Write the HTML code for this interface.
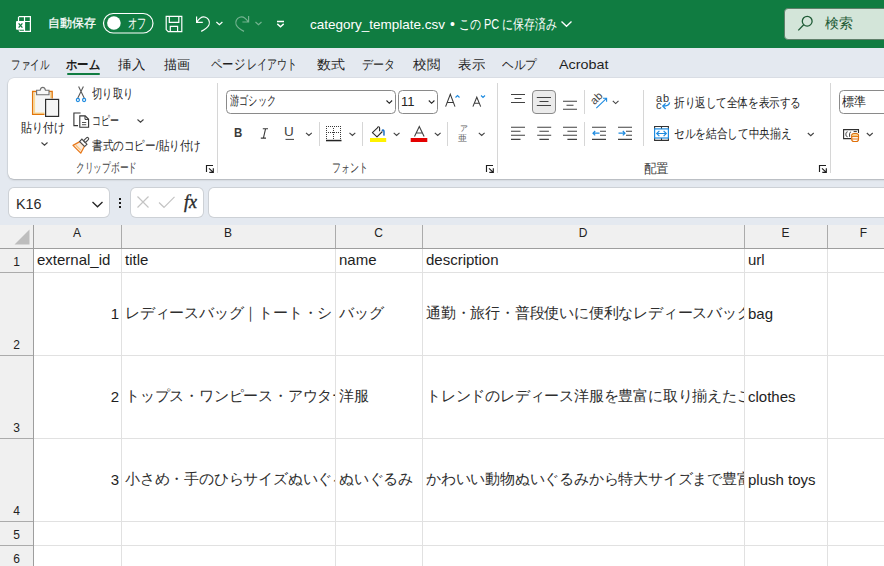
<!DOCTYPE html><html><head><meta charset="utf-8">
<style>
*{box-sizing:border-box}
html,body{margin:0;padding:0;width:884px;height:566px;overflow:hidden;background:#E4E9F0;font-family:"Liberation Sans",sans-serif;color:#242424}
.a{position:absolute;white-space:nowrap}
#title{position:absolute;left:0;top:0;width:884px;height:48px;background:#107C41;color:#fff}
#ribbon{position:absolute;left:8px;top:78px;width:900px;height:101px;background:#fff;border-radius:6px;box-shadow:0 0 0 .5px rgba(0,0,0,.08),0 1px 2px rgba(0,0,0,.2)}
.tab{position:absolute;top:56px;font-size:13px;color:#1F1F1F;white-space:nowrap}
.rt{position:absolute;font-size:12.5px;color:#242424;white-space:nowrap}
.box{position:absolute;background:#fff;border-radius:5px;box-shadow:0 0 0 1px #CDD1D6}
#grid{position:absolute;left:0;top:225px;width:884px;height:341px;background:#fff;overflow:hidden}
.ch{position:absolute;top:0;height:23px;background:#F0F0F0;border-right:1px solid #ABABAB;font-size:13px;color:#222;text-align:center;line-height:23px}
.rh{position:absolute;left:0;width:33px;background:#F0F0F0;border-bottom:1px solid #ABABAB;border-right:1px solid #9E9E9E;font-size:13px;color:#222;text-align:center}
.cell{position:absolute;font-size:15px;color:#1E1E1E;overflow:hidden;white-space:nowrap}
</style></head><body>
<div id="title">
<svg class="a" style="left:0;top:0" width="320" height="48" viewBox="0 0 320 48" fill="none" stroke="#fff" stroke-width="1.2">
 <path d="M18.8 16.6h11.6v14.8H19.8l-1-1"></path>
 <path d="M24.5 16.6v4.9M18.8 21.5h11.6M24.5 21.5v9.9"></path>
 <path d="M18.5 16.8v4.4"></path>
 <rect x="16" y="21" width="9" height="8.8" rx="1" fill="#fff" stroke="none"></rect>
 <path d="M18.6 23.4l3.8 4.2M22.4 23.4l-3.8 4.2" stroke="#107C41" stroke-width="1.3"></path>
 <rect x="103.5" y="13.5" width="49.5" height="19.5" rx="9.75"></rect>
 <circle cx="113.9" cy="23" r="6.8" fill="#fff" stroke="none"></circle>
 <path d="M166.2 16.4h15.6v15.2H168.2l-2-2z"></path>
 <path d="M169.3 16.4v5.9h9.5v-5.9M170.3 31.6v-5.3h7.3v5.3"></path>
 <path d="M196.6 16.4v6h6.2M196.8 22.2C199.5 17.8 203 16.4 205.5 17.2C208.6 18.3 210.2 21.5 209 24.8C208 27.2 204.5 29.8 201.2 31.4"></path>
 <path d="M216.4 22l3 2.7 3-2.7"></path>
 <g stroke="#fff" stroke-opacity=".42"><path d="M248.6 16v6h-6.2M248.4 22.2C245.7 17.8 242.2 16.4 239.7 17.2C236.6 18.3 235 21.5 236.2 24.8C237.2 27.2 240.7 29.8 244 31.4"></path>
 <path d="M255.5 22l3 2.7 3-2.7"></path></g>
 <path d="M277 21.5h7M277.3 23.9l3.2 2.8 3.2-2.8" stroke-width="1.4"></path>
</svg>
<span class="a t" style="left: 47.5px; top: 14.8px; font-size: 12.3px; --w: 48px; -webkit-text-stroke: 0.25px rgb(255, 255, 255); transform: scaleX(1); transform-origin: 0px 50%;">自動保存</span>
<span class="a t" style="left: 127.5px; top: 15px; font-size: 13.5px; --w: 18.5px; transform: scaleX(0.6607); transform-origin: 0px 50%;">オフ</span>
<span class="a t" style="left: 309.5px; top: 16.5px; font-size: 13.5px; --w: 135px; transform: scaleX(0.9994); transform-origin: 0px 50%;">category_template.csv</span>
<span class="a" style="left:450px;top:16px;font-size:14px">•</span>
<span class="a t" style="left: 459px; top: 16px; font-size: 14px; --w: 98px; transform: scaleX(0.7825); transform-origin: 0px 50%;">この PC に保存済み</span>
<svg class="a" style="left:560px;top:19px" width="14" height="10"><path d="M1.5 2.5l5 4.8 5-4.8" stroke="#fff" stroke-width="1.3" fill="none"></path></svg>
<div class="a" style="left:784px;top:8px;width:120px;height:32px;background:#D3E5D9;border:1px solid #5F7F6A;border-radius:4px"></div>
<svg class="a" style="left:796px;top:14px" width="20" height="20" fill="none" stroke="#1E5B36" stroke-width="1.3"><circle cx="11.2" cy="7.2" r="4.9"></circle><path d="M7.7 10.7L2.3 16.4"></path></svg>
<span class="a t" style="left: 825px; top: 15px; font-size: 13.5px; color: rgb(30, 91, 54); --w: 28px; transform: scaleX(1); transform-origin: 0px 50%;">検索</span>
</div>
<span class="tab t" style="left: 11px; --w: 38px; transform: scaleX(0.7308); transform-origin: 0px 50%;">ファイル</span>
<span class="tab t" style="left: 66px; font-weight: bold; --w: 34px; transform: scaleX(0.8718); transform-origin: 0px 50%;">ホーム</span>
<div class="a" style="left:67px;top:73px;width:33px;height:2px;background:#107C41;border-radius:1px"></div>
<span class="tab t" style="left: 118px; --w: 27px; transform: scaleX(1.0385); transform-origin: 0px 50%;">挿入</span>
<span class="tab t" style="left: 164px; --w: 26px; transform: scaleX(1); transform-origin: 0px 50%;">描画</span>
<span class="tab t" style="left: 210.5px; font-size: 13.5px; --w: 34px; transform: scaleX(0.8095); transform-origin: 0px 50%;">ページ</span><span class="tab t" style="left: 247px; font-size: 13.5px; --w: 50px; transform: scaleX(0.7143); transform-origin: 0px 50%;">レイアウト</span>
<span class="tab t" style="left: 317px; --w: 28px; transform: scaleX(1.0769); transform-origin: 0px 50%;">数式</span>
<span class="tab t" style="left: 362px; --w: 33px; transform: scaleX(0.8462); transform-origin: 0px 50%;">データ</span>
<span class="tab t" style="left: 413px; --w: 27px; transform: scaleX(1.0385); transform-origin: 0px 50%;">校閲</span>
<span class="tab t" style="left: 458px; --w: 27px; transform: scaleX(1.0385); transform-origin: 0px 50%;">表示</span>
<span class="tab t" style="left: 502px; --w: 35px; transform: scaleX(0.8974); transform-origin: 0px 50%;">ヘルプ</span>
<span class="tab t" style="left: 558.5px; top: 57px; font-size: 13.5px; --w: 49.5px; transform: scaleX(1.0638); transform-origin: 0px 50%;">Acrobat</span>

<div id="ribbon"></div>
<svg class="a" style="left:0;top:78px" width="884" height="102" viewBox="0 78 884 102" fill="none" stroke-width="1">
 <!-- separators -->
 <g stroke="#D6D6D6"><path d="M217.5 83v90M497.5 83v90M830.5 83v90M319.5 122v24M362.5 122v24M447.5 122v24M584.5 90v24M584.5 122v24M643.5 90v56"></path></g>
 <!-- paste icon -->
 <rect x="33" y="91.8" width="19" height="22.4" fill="#F5F5F5" stroke="none"></rect>
 <path d="M34.4 93v20.1H44.5M50.8 93v5" stroke="#FAD98F" stroke-width="1.4"></path>
 <path d="M36.2 91.5H32.6V114.4H44.5M48.8 91.5h3.4V98.5" stroke="#E2760A" stroke-width="1.3"></path>
 <path d="M36.6 94.8V90.2h3.6c.4-1.9 1.3-2.8 2.6-2.8s2.2.9 2.6 2.8h3.6v4.6z" stroke="#707070" stroke-width="1.1" fill="#F8F8F8"></path>
 <rect x="45.6" y="99.4" width="13" height="17" stroke="#2E2E2E" stroke-width="1.2" fill="#F5F5F5"></rect>
 <path d="M41.5 142.5l3 2.7 3-2.7" stroke="#424242" stroke-width="1.1"></path>
 <!-- scissors -->
 <path d="M78.6 86.4l5.6 11.6M83.4 86.4l-5.6 11.6" stroke="#5A5A5A" stroke-width="1.1"></path>
 <circle cx="77.9" cy="100" r="1.55" stroke="#1E8BE0" stroke-width="1.2"></circle><circle cx="84.1" cy="100" r="1.55" stroke="#1E8BE0" stroke-width="1.2"></circle>
 <!-- copy -->
 <path d="M80.6 113H73.9v12.6H78" stroke="#333" stroke-width="1.1"></path>
 <path d="M79.8 115.9H85.2l3.4 3.4v7.9H79.8z" stroke="#333" stroke-width="1.1" fill="#fff"></path>
 <path d="M85 116v3.4h3.5" stroke="#333" stroke-width="1"></path>
 <path d="M82 122.5h4.2M82 124.7h4.2" stroke="#555" stroke-width="1"></path>
 <path d="M137.5 119.5l3 2.7 3-2.7" stroke="#424242" stroke-width="1.1"></path>
 <!-- format painter -->
 <g transform="translate(82.3 143.8) rotate(45)">
  <path d="M-3.3 0.2h6.6l2.2 7.5h-11z" fill="#FCEBDA" stroke="#E8781A" stroke-width="1.2" stroke-linejoin="round"></path>
  <path d="M-3.6 5.6h7" stroke="#F8C27A" stroke-width="1.3"></path>
  <rect x="-3.6" y="-3" width="7.2" height="3.2" fill="#fff" stroke="#4A4A4A" stroke-width="1.1"></rect>
  <rect x="-1.3" y="-8.4" width="2.6" height="5.4" rx="1.2" fill="#fff" stroke="#4A4A4A" stroke-width="1.1"></rect>
 </g>
 <!-- launchers -->
 <g stroke="#1E1E1E" stroke-width="1.15"><path d="M206.5 172V165.5H213M209 168.3L213 172.2M213.3 168.3V172.4H209.3"></path><path d="M486.5 172V165.5H493M489 168.3L493 172.2M493.3 168.3V172.4H489.3"></path><path d="M819.5 172V165.5H826M822 168.3L826 172.2M826.3 168.3V172.4H822.3"></path></g>
 <!-- font box -->
 <rect x="226.5" y="90.5" width="169" height="23" rx="4" stroke="#8A8A8A" fill="#fff"></rect>
 <rect x="398.5" y="90.5" width="39" height="23" rx="4" stroke="#8A8A8A" fill="#fff"></rect>
 <g stroke="#242424" stroke-width="1.1"><path d="M386.5 100.5l2.8 2.8 2.8-2.8M428.8 100.5l2.8 2.8 2.8-2.8"></path></g>
 <path d="M445.6 106.6L450.3 94.2L455 106.6M447.2 102.4h6.2" stroke="#3A3A3A" stroke-width="1.05"></path>
 <path d="M472.9 106.6L476.8 97.2L480.7 106.6M474.3 103.3h5" stroke="#3A3A3A" stroke-width="1.05"></path>
 <path d="M455.5 97.5l2-2 2 2" stroke="#1E8BE0" stroke-width="1.1"></path>
 <path d="M481 95.5l2 2 2-2" stroke="#1E8BE0" stroke-width="1.1"></path>
 <!-- chevrons row2 -->
 <g stroke="#424242" stroke-width="1.1"><path d="M306 132.8l2.9 2.7 2.9-2.7M349.5 132.8l2.9 2.7 2.9-2.7M393.7 132.8l2.9 2.7 2.9-2.7M434.8 132.8l2.9 2.7 2.9-2.7M478.8 132.8l2.9 2.7 2.9-2.7"></path></g>
 <path d="M285.5 139.4h8.5" stroke="#424242"></path>
 <path d="M262.8 128.7h5.2M260.8 138.1h5.2M265.6 128.7l-2.2 9.4" stroke="#3A3A3A" stroke-width="1.1"></path>
 <!-- borders icon -->
 <path d="M340 126h1v1h-1zM340 132h1v1h-1zM340 138h1v1h-1zM326 130h1v1h-1zM326 136h1v1h-1zM333 132h1v1h-1zM333 138h1v1h-1zM340 128h1v1h-1zM328 126h1v1h-1zM328 132h1v1h-1zM340 134h1v1h-1zM326 126h1v1h-1zM326 132h1v1h-1zM326 138h1v1h-1zM330 126h1v1h-1zM330 132h1v1h-1zM333 128h1v1h-1zM332 126h1v1h-1zM332 132h1v1h-1zM333 134h1v1h-1zM340 130h1v1h-1zM340 136h1v1h-1zM334 126h1v1h-1zM334 132h1v1h-1zM326 128h1v1h-1zM336 126h1v1h-1zM336 132h1v1h-1zM326 134h1v1h-1zM333 130h1v1h-1zM333 136h1v1h-1zM338 126h1v1h-1zM338 132h1v1h-1z" fill="#3A3A3A" stroke="none"></path>
 <rect x="326" y="139.8" width="15.5" height="1.5" fill="#242424" stroke="none"></rect>
 <!-- fill -->
 <path d="M379.6 131.3V127.9a1.1 1.1 0 0 0-2.2 0L372.4 132.6L377 136.9L382.4 131.5" stroke="#2A2A2A" stroke-width="1.1" fill="#F8F8F8" stroke-linejoin="round"></path>
 <path d="M382 130.8c.6-.9 1.4-1 1.8-.2c.4 1 .2 3 .1 5" stroke="#1E6FC0" stroke-width="1.5"></path>
 <rect x="370" y="138" width="16.2" height="4" fill="#FFF200" stroke="none"></rect>
 <rect x="410.7" y="138" width="16.6" height="4" fill="#E50000" stroke="none"></rect>
 <path d="M414.5 136.5l4.8-10 4.8 10M416 133h6.5" stroke="#424242" stroke-width="1.1"></path>
 <!-- align icons -->
 <rect x="532.5" y="90.5" width="23" height="23" rx="3.5" stroke="#8A8A8A" fill="#EBEBEB"></rect>
 <g stroke="#424242" stroke-width="1.1">
  <path d="M511 94.5h14M514.5 98.5h7M511 102.5h14"></path>
  <path d="M536.8 97.5h14.2M539.5 101.5h9M536.8 105.5h14.2"></path>
  <path d="M563 101.2h14M566.5 105.3h7M563 109.3h14"></path>
  <path d="M511 127.2h14M511 131.2h9.5M511 135.2h14M511 139.4h9.5"></path>
  <path d="M537.2 127.2h14M539.4 131.2h9.5M537.2 135.2h14M539.4 139.4h9.5"></path>
  <path d="M563 127.2h14M567.4 131.2h9.6M563 135.2h14M567.4 139.4h9.6"></path>
  <path d="M592 127.2h14M600 131.2h6M600 135.2h6M592 139.4h14"></path>
  <path d="M618 127.2h14M626 131.2h6M626 135.2h6M618 139.4h14"></path>
  <path d="M612.8 100.8l2.85 2.8 2.85-2.8M807.8 133l2.95 2.7 2.95-2.7M866.8 133l2.95 2.7 2.95-2.7"></path>
 </g>
 <g stroke="#1E8BE0" stroke-width="1.2"><path d="M593 133.2h6.5M595.2 131l-2.2 2.2 2.2 2.2"></path><path d="M618.5 133.2h6.5M622.8 131l2.2 2.2-2.2 2.2"></path>
 <path d="M596.3 108.2l10.2-9.8M603 98.3h3.6v3.5" stroke-width="1.1"></path>
 <path d="M669.6 102.3c-.3 2.5-2.6 3.8-6.8 3.8M665.6 103.4l-2.8 2.7 2.8 2.9" stroke-width="1.3"></path></g>
 <!-- merge -->
 <path d="M654.6 129v-2.5h13.8v2.5M654.6 138v2.4h13.8V138M661.5 126.5v2.5M661.5 138v2.4" stroke="#333" stroke-width="1.1"></path>
 <rect x="654.6" y="128.9" width="13.8" height="9.1" stroke="#1E8BE0" stroke-width="1.2"></rect>
 <path d="M656.6 133.5h9.8M659.4 130.9l-2.7 2.6 2.7 2.6M663.6 130.9l2.7 2.6-2.7 2.6" stroke="#1E8BE0" stroke-width="1.2"></path>
 <!-- number box -->
 <rect x="839.5" y="90.5" width="80" height="23" rx="4" stroke="#8A8A8A" fill="#fff"></rect>
 <path d="M851 138.6H843.6V129.6H858.5V133" stroke="#2E2E2E" stroke-width="1.1"></path>
 <path d="M847.6 131.8c-1.1 0-1.7.9-1.7 2.5s.6 2.5 1.7 2.5M849.6 136.8v-3.3c0-.9.6-1.4 1.5-1.4M853.6 131.6h3.2" stroke="#333" stroke-width="1"></path>
 <rect x="851.7" y="133.6" width="6.8" height="7.9" rx="2.2" fill="#fff" stroke="#E0700A" stroke-width="1.2"></rect>
 <path d="M852.6 135.3h5" stroke="#F7C86A" stroke-width="1.3"></path>
 <path d="M851.7 136.6h6.8M851.7 139h6.8" stroke="#E0700A" stroke-width="1"></path>
</svg>
<span class="rt t" style="left: 21px; top: 120px; --w: 44px; transform: scaleX(0.8462); transform-origin: 0px 50%;">貼り付け</span>
<span class="rt t" style="left: 92px; top: 86px; --w: 41px; transform: scaleX(0.7885); transform-origin: 0px 50%;">切り取り</span>
<span class="rt t" style="left: 92px; top: 113px; --w: 27px; transform: scaleX(0.6923); transform-origin: 0px 50%;">コピー</span>
<span class="rt t" style="left: 92px; top: 138px; --w: 109px; transform: scaleX(0.8166); transform-origin: 0px 50%;">書式のコピー/貼り付け</span>
<span class="rt t" style="left: 76px; top: 160px; color: rgb(66, 66, 66); --w: 61px; transform: scaleX(0.6703); transform-origin: 0px 50%;">クリップボード</span>
<span class="rt t" style="left: 229.5px; top: 93px; --w: 46px; transform: scaleX(0.7077); transform-origin: 0px 50%;">游ゴシック</span>
<span class="rt" style="left:401px;top:94px;font-size:13px">11</span>
<span class="rt t" style="left: 234.3px; top: 125.3px; font-size: 13px; font-weight: bold; color: rgb(58, 58, 58); --w: 8.3px; transform: scaleX(0.8839); transform-origin: 0px 50%;">B</span>

<span class="rt" style="left:284px;top:124px;font-size:13.5px;color:#424242">U</span>
<span class="rt" style="left:460px;top:124px;font-size:7.5px;color:#616161">ア</span>
<span class="rt" style="left:458px;top:132px;font-size:9px;color:#616161">亜</span>
<span class="rt t" style="left: 332px; top: 160px; color: rgb(66, 66, 66); --w: 36px; transform: scaleX(0.6923); transform-origin: 0px 50%;">フォント</span>
<span class="rt" style="left:590px;top:92px;font-size:11px;color:#424242;transform:rotate(-45deg);transform-origin:50% 50%">ab</span>
<span class="rt" style="left:656px;top:91.6px;font-size:11px;color:#333;letter-spacing:1px">ab</span>
<span class="rt" style="left:656px;top:98.7px;font-size:11px;color:#333">c</span>
<span class="rt t" style="left: 673.5px; top: 95px; --w: 127px; transform: scaleX(0.8141); transform-origin: 0px 50%;">折り返して全体を表示する</span>
<span class="rt t" style="left: 673.5px; top: 126px; --w: 117.5px; transform: scaleX(0.8217); transform-origin: 0px 50%;">セルを結合して中央揃え</span>
<span class="rt t" style="left: 643.5px; top: 161px; color: rgb(66, 66, 66); --w: 25px; transform: scaleX(0.9615); transform-origin: 0px 50%;">配置</span>
<span class="rt t" style="left: 842px; top: 93.5px; --w: 24px; transform: scaleX(0.9231); transform-origin: 0px 50%;">標準</span>

<div class="box" style="left:9px;top:188px;width:100px;height:29px"></div>
<div class="box" style="left:131px;top:188px;width:72px;height:29px"></div>
<div class="box" style="left:209px;top:188px;width:700px;height:29px"></div>
<span class="a t" style="left: 15.5px; top: 196px; font-size: 14px; color: rgb(42, 42, 42); --w: 25.5px; transform: scaleX(1.0232); transform-origin: 0px 50%;">K16</span>
<svg class="a" style="left:0;top:180px" width="220" height="45" viewBox="0 180 220 45" fill="none">
 <path d="M92.5 202l5 4.8 5-4.8" stroke="#242424" stroke-width="1.3"></path>
 <g fill="#1A1A1A"><rect x="119" y="198" width="2" height="2"></rect><rect x="119" y="202" width="2" height="2"></rect><rect x="119" y="206" width="2" height="2"></rect></g>
 <path d="M137.5 196.5l11 11M148.5 196.5l-11 11" stroke="#C4C4C4" stroke-width="1.2"></path>
 <path d="M159 202.5l5 4.8 10.5-10.5" stroke="#C4C4C4" stroke-width="1.2"></path>
</svg>
<span class="a" style="left:184px;top:191.5px;font-size:18px;font-style:italic;font-family:'Liberation Serif',serif;color:#2A2A2A;-webkit-text-stroke:.4px #2A2A2A">fx</span>
<div id="grid">
<div class="a" style="left:0;top:0;width:884px;height:23px;background:#F0F0F0"></div>
<div class="a" style="left:0;top:0;width:33px;height:341px;background:#F0F0F0"></div>
<div class="a" style="left:33px;top:1px;width:88px;text-align:center;font-size:12px;color:#222">A</div>
<div class="a" style="left:121px;top:0;width:1px;height:23px;background:#ABABAB"></div>
<div class="a" style="left:121px;top:23px;width:1px;height:318px;background:#E1E1E1"></div>
<div class="a" style="left:121px;top:1px;width:214px;text-align:center;font-size:12px;color:#222">B</div>
<div class="a" style="left:335px;top:0;width:1px;height:23px;background:#ABABAB"></div>
<div class="a" style="left:335px;top:23px;width:1px;height:318px;background:#E1E1E1"></div>
<div class="a" style="left:335px;top:1px;width:87px;text-align:center;font-size:12px;color:#222">C</div>
<div class="a" style="left:422px;top:0;width:1px;height:23px;background:#ABABAB"></div>
<div class="a" style="left:422px;top:23px;width:1px;height:318px;background:#E1E1E1"></div>
<div class="a" style="left:422px;top:1px;width:322px;text-align:center;font-size:12px;color:#222">D</div>
<div class="a" style="left:744px;top:0;width:1px;height:23px;background:#ABABAB"></div>
<div class="a" style="left:744px;top:23px;width:1px;height:318px;background:#E1E1E1"></div>
<div class="a" style="left:744px;top:1px;width:83px;text-align:center;font-size:12px;color:#222">E</div>
<div class="a" style="left:827px;top:0;width:1px;height:23px;background:#ABABAB"></div>
<div class="a" style="left:827px;top:23px;width:1px;height:318px;background:#E1E1E1"></div>
<div class="a" style="left:827px;top:1px;width:73px;text-align:center;font-size:12px;color:#222">F</div>
<div class="a" style="left:900px;top:0;width:1px;height:23px;background:#ABABAB"></div>
<div class="a" style="left:900px;top:23px;width:1px;height:318px;background:#E1E1E1"></div>
<div class="a" style="left:0;top:23px;width:884px;height:1px;background:#9E9E9E"></div>
<div class="a" style="left:33px;top:0;width:1px;height:341px;background:#9E9E9E"></div>
<div class="a" style="left:34px;top:47px;width:850px;height:1px;background:#E1E1E1"></div>
<div class="a" style="left:0;top:47px;width:33px;height:1px;background:#ABABAB"></div>
<div class="a" style="left:0;top:30px;width:33px;text-align:center;font-size:12px;color:#222">1</div>
<div class="a" style="left:34px;top:130px;width:850px;height:1px;background:#E1E1E1"></div>
<div class="a" style="left:0;top:130px;width:33px;height:1px;background:#ABABAB"></div>
<div class="a" style="left:0;top:113px;width:33px;text-align:center;font-size:12px;color:#222">2</div>
<div class="a" style="left:34px;top:213px;width:850px;height:1px;background:#E1E1E1"></div>
<div class="a" style="left:0;top:213px;width:33px;height:1px;background:#ABABAB"></div>
<div class="a" style="left:0;top:196px;width:33px;text-align:center;font-size:12px;color:#222">3</div>
<div class="a" style="left:34px;top:296px;width:850px;height:1px;background:#E1E1E1"></div>
<div class="a" style="left:0;top:296px;width:33px;height:1px;background:#ABABAB"></div>
<div class="a" style="left:0;top:279px;width:33px;text-align:center;font-size:12px;color:#222">4</div>
<div class="a" style="left:34px;top:320px;width:850px;height:1px;background:#E1E1E1"></div>
<div class="a" style="left:0;top:320px;width:33px;height:1px;background:#ABABAB"></div>
<div class="a" style="left:0;top:303px;width:33px;text-align:center;font-size:12px;color:#222">5</div>
<div class="a" style="left:34px;top:344px;width:850px;height:1px;background:#E1E1E1"></div>
<div class="a" style="left:0;top:344px;width:33px;height:1px;background:#ABABAB"></div>
<div class="a" style="left:0;top:327px;width:33px;text-align:center;font-size:12px;color:#222">6</div>
<div class="cell" style="left:34px;top:24px;width:87px;height:23px;line-height:21px;text-align:left;padding:0 0 0 3px">external_id</div>
<div class="cell" style="left:122px;top:24px;width:213px;height:23px;line-height:21px;text-align:left;padding:0 0 0 3px">title</div>
<div class="cell" style="left:336px;top:24px;width:86px;height:23px;line-height:21px;text-align:left;padding:0 0 0 3px">name</div>
<div class="cell" style="left:423px;top:24px;width:321px;height:23px;line-height:21px;text-align:left;padding:0 0 0 3px">description</div>
<div class="cell" style="left:745px;top:24px;width:82px;height:23px;line-height:21px;text-align:left;padding:0 0 0 3px">url</div>
<div class="cell" style="left:34px;top:48px;width:87px;height:82px;line-height:82px;text-align:right;padding:0 2px 0 3px">1</div>
<div class="cell" style="left:122px;top:48px;width:213px;height:82px;line-height:80px;font-size:15px;letter-spacing:-0.2px;color:#2E2E2E;text-align:left;padding:0 0 0 3px">レディースバッグ｜トート・ショルダー</div>
<div class="cell" style="left:336px;top:48px;width:86px;height:82px;line-height:80px;font-size:15px;letter-spacing:-0.2px;color:#2E2E2E;text-align:left;padding:0 0 0 3px">バッグ</div>
<div class="cell" style="left:423px;top:48px;width:321px;height:82px;line-height:80px;font-size:15px;letter-spacing:-0.2px;color:#2E2E2E;text-align:left;padding:0 0 0 3px">通勤・旅行・普段使いに便利なレディースバッグを多数取り揃え</div>
<div class="cell" style="left:745px;top:48px;width:82px;height:82px;line-height:82px;text-align:left;padding:0 0 0 3px">bag</div>
<div class="cell" style="left:34px;top:131px;width:87px;height:82px;line-height:82px;text-align:right;padding:0 2px 0 3px">2</div>
<div class="cell" style="left:122px;top:131px;width:213px;height:82px;line-height:80px;font-size:15px;letter-spacing:-0.2px;color:#2E2E2E;text-align:left;padding:0 0 0 3px">トップス・ワンピース・アウター</div>
<div class="cell" style="left:336px;top:131px;width:86px;height:82px;line-height:80px;font-size:15px;letter-spacing:-0.2px;color:#2E2E2E;text-align:left;padding:0 0 0 3px">洋服</div>
<div class="cell" style="left:423px;top:131px;width:321px;height:82px;line-height:80px;font-size:15px;letter-spacing:-0.2px;color:#2E2E2E;text-align:left;padding:0 0 0 3px">トレンドのレディース洋服を豊富に取り揃えたこだわりの</div>
<div class="cell" style="left:745px;top:131px;width:82px;height:82px;line-height:82px;text-align:left;padding:0 0 0 3px">clothes</div>
<div class="cell" style="left:34px;top:214px;width:87px;height:82px;line-height:82px;text-align:right;padding:0 2px 0 3px">3</div>
<div class="cell" style="left:122px;top:214px;width:213px;height:82px;line-height:80px;font-size:15px;letter-spacing:-0.2px;color:#2E2E2E;text-align:left;padding:0 0 0 3px">小さめ・手のひらサイズぬいぐるみ</div>
<div class="cell" style="left:336px;top:214px;width:86px;height:82px;line-height:80px;font-size:15px;letter-spacing:-0.2px;color:#2E2E2E;text-align:left;padding:0 0 0 3px">ぬいぐるみ</div>
<div class="cell" style="left:423px;top:214px;width:321px;height:82px;line-height:80px;font-size:15px;letter-spacing:-0.2px;color:#2E2E2E;text-align:left;padding:0 0 0 3px">かわいい動物ぬいぐるみから特大サイズまで豊富に</div>
<div class="cell" style="left:745px;top:214px;width:82px;height:82px;line-height:82px;text-align:left;padding:0 0 0 3px">plush toys</div>
<svg class="a" style="left:0;top:0" width="33" height="23"><path d="M14.5 19.5L29.5 4.5V19.5Z" fill="#BDBDBD"></path></svg>
</div>

</body></html>
